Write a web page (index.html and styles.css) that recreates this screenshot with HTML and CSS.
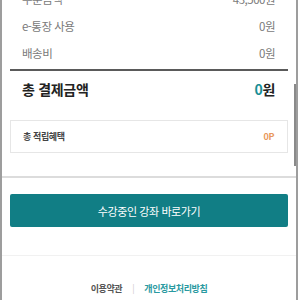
FILE: index.html
```html
<!DOCTYPE html>
<html lang="ko">
<head>
  <meta charset="UTF-8">
  <title>결제 완료</title>
  <link rel="stylesheet" href="styles.css">
</head>
<body>
  <div class="frame">
    <div class="summary">
      <div class="row"><span>주문금액</span><span>43,500원</span></div>
      <div class="row"><span>e-통장 사용</span><span>0원</span></div>
      <div class="row"><span>배송비</span><span>0원</span></div>
    </div>

    <div class="total">
      <span>총 결제금액</span>
      <span><em>0</em>원</span>
    </div>

    <div class="point">
      <span>총 적립혜택</span>
      <span class="point-value">0P</span>
    </div>

    <div class="action">
      <button class="go-btn">수강중인 강좌 바로가기</button>
    </div>

    <div class="footer">
      <a href="#" class="terms">이용약관</a>
      <span class="sep">|</span>
      <a href="#" class="privacy">개인정보처리방침</a>
    </div>

    <div class="scrollbar"></div>
  </div>
</body>
</html>
```

FILE: styles.css
```css
html, body {
  margin: 0;
  padding: 0;
  background: #fff;
  overflow: hidden;
}
body {
  font-family: "Noto Sans CJK KR", "Noto Sans", sans-serif;
  color: #333;
}
.frame {
  position: relative;
  width: 294px;
  height: 300px;
  border-left: 2px solid #9d9d9d;
  border-right: 2px solid #9d9d9d;
  overflow: hidden;
}
.summary {
  margin: -15px 8px 0;
  padding: 0 13px 3px 12px;
  border-bottom: 2px solid #5a5a5a;
}
.row {
  display: flex;
  justify-content: space-between;
  align-items: center;
  height: 27px;
  font-size: 11.5px;
  letter-spacing: -0.5px;
  color: #7a7a7a;
}
.total {
  display: flex;
  justify-content: space-between;
  align-items: center;
  height: 24px;
  margin: 6px 8px 0;
  padding: 0 13px 0 12px;
  font-size: 14px;
  font-weight: bold;
  letter-spacing: -0.3px;
  color: #222;
}
.total em {
  font-style: normal;
  color: #1a8f96;
}
.point {
  display: flex;
  justify-content: space-between;
  align-items: center;
  height: 31px;
  margin: 19px 8px 0;
  padding: 0 13px 0 12px;
  border: 1px solid #e6e6e6;
  font-size: 9px;
  font-weight: bold;
  letter-spacing: -0.4px;
  color: #444;
}
.point-value {
  color: #e9985c;
}
.action {
  margin-top: 23px;
  padding: 16px 8px 28px;
  border-top: 2px solid #dcdcdc;
  border-bottom: 1px solid #f1f1f1;
}
.go-btn {
  display: block;
  width: 100%;
  height: 33px;
  border: none;
  border-radius: 2px;
  background: #117e85;
  color: #fff;
  font-family: inherit;
  font-size: 11px;
  letter-spacing: -0.4px;
}
.footer {
  display: flex;
  justify-content: center;
  align-items: center;
  gap: 10px;
  padding-top: 26px;
  font-size: 9px;
  font-weight: bold;
  letter-spacing: -0.4px;
}
.footer a {
  text-decoration: none;
}
.terms {
  color: #555;
}
.sep {
  color: #ccc;
  font-weight: normal;
}
.privacy {
  color: #2a9aa1;
}
.scrollbar {
  position: absolute;
  right: 0;
  top: 84px;
  width: 2px;
  height: 82px;
  background: #8a8a8a;
}
```
